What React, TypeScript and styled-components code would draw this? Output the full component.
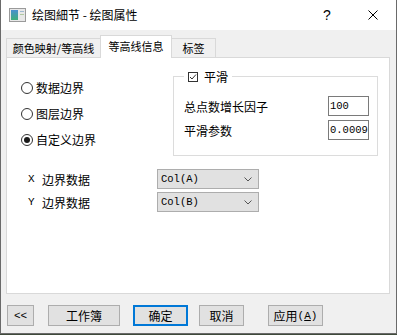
import styled, { createGlobalStyle } from 'styled-components';

const cjk = `"Noto Sans CJK SC", "Noto Sans", sans-serif`;
const mono = `"Liberation Mono", "Noto Sans CJK SC", monospace`;

const GlobalStyle = createGlobalStyle`
  html, body {
    margin: 0;
    padding: 0;
    background: #3f4a3a;
  }
  body {
    font-family: ${cjk};
    font-size: 12px;
    color: #000;
  }
`;

const Window = styled.div`
  width: 397px;
  height: 334px;
  box-sizing: border-box;
  border: 1px solid #6a6a6a;
  border-top: none;
  background: #f0f0f0;
  display: flex;
  flex-direction: column;
`;

const TitleBar = styled.div`
  height: 30px;
  flex: 0 0 30px;
  background: #fff;
  display: flex;
  align-items: center;
  padding-left: 8px;
`;

const TitleText = styled.span`
  margin-left: 6px;
  font-size: 12px;
  flex: 1;
  line-height: 30px;
`;

const CaptionButton = styled.div`
  width: 46px;
  height: 30px;
  display: flex;
  align-items: center;
  justify-content: center;
  font-family: "Liberation Sans", sans-serif;
  font-size: 14px;
`;

const Body = styled.div`
  flex: 1;
  display: flex;
  flex-direction: column;
  padding: 5px 6px 0 5px;
`;

const TabStrip = styled.div`
  display: flex;
  align-items: flex-end;
  height: 23px;
  margin-bottom: -1px;
  position: relative;
  z-index: 1;
`;

const Tab = styled.div<{ $active?: boolean; $w: number }>`
  box-sizing: border-box;
  width: ${({ $w }) => $w}px;
  height: ${({ $active }) => ($active ? 23 : 19)}px;
  margin-bottom: ${({ $active }) => ($active ? 0 : 1)}px;
  margin-left: ${({ $active }) => ($active ? -1 : 0)}px;
  border: 1px solid #d9d9d9;
  border-bottom: none;
  background: ${({ $active }) => ($active ? '#fff' : '#f0f0f0')};
  display: flex;
  align-items: center;
  justify-content: center;
  font-size: 11px;
  padding-bottom: ${({ $active }) => ($active ? 2 : 0)}px;
  z-index: ${({ $active }) => ($active ? 2 : 1)};
  & + & {
    margin-left: -1px;
  }
`;

const Panel = styled.div`
  box-sizing: border-box;
  height: 237px;
  border: 1px solid #d9d9d9;
  background: #fff;
  display: flex;
  flex-direction: column;
`;

const TopArea = styled.div`
  display: flex;
  justify-content: space-between;
  padding: 11px 11px 0 14px;
`;

const RadioList = styled.div`
  display: flex;
  flex-direction: column;
  gap: 7px;
  margin-top: 9px;
`;

const RadioRow = styled.label`
  height: 19px;
  display: flex;
  align-items: center;
  gap: 3px;
  font-size: 12px;
`;

const RadioDot = styled.span<{ $checked?: boolean }>`
  box-sizing: border-box;
  width: 12px;
  height: 12px;
  border-radius: 50%;
  border: 1px solid #333;
  background: #fff;
  display: flex;
  align-items: center;
  justify-content: center;
  &::after {
    content: '';
    width: 6px;
    height: 6px;
    border-radius: 50%;
    background: ${({ $checked }) => ($checked ? '#1a1a1a' : 'transparent')};
  }
`;

const GroupBox = styled.fieldset`
  box-sizing: border-box;
  width: 205px;
  margin: 0;
  padding: 12px 8px 15px 10px;
  border: 1px solid #dcdcdc;
  display: flex;
  flex-direction: column;
  gap: 4px;
`;

const Legend = styled.legend`
  padding: 0 4px;
  height: 15px;
  display: flex;
  align-items: center;
  gap: 6px;
  font-size: 12px;
`;

const FieldRow = styled.div`
  height: 20px;
  display: flex;
  align-items: center;
  justify-content: space-between;
`;

const NumberBox = styled.div`
  box-sizing: border-box;
  width: 41px;
  height: 20px;
  border: 1px solid #7a7a7a;
  background: #fff;
  padding-left: 1px;
  font-family: ${mono};
  font-size: 10.5px;
  line-height: 18px;
  white-space: nowrap;
  overflow: hidden;
`;

const SourceList = styled.div`
  display: flex;
  flex-direction: column;
  gap: 3px;
  margin-top: 13px;
  padding-left: 21px;
`;

const SourceRow = styled.div`
  display: flex;
  align-items: center;
  height: 20px;
`;

const SourceLabel = styled.span`
  width: 129px;
  font-size: 12px;
  display: flex;
  align-items: center;
`;

const AxisLetter = styled.span`
  font-family: ${mono};
  font-size: 11px;
  width: 14px;
`;

const Select = styled.div`
  box-sizing: border-box;
  width: 102px;
  height: 20px;
  border: 1px solid #adadad;
  background: #e1e1e1;
  display: flex;
  align-items: center;
  justify-content: space-between;
  padding: 0 6px 0 3px;
  font-family: ${mono};
  font-size: 10.5px;
`;

const ButtonRow = styled.div`
  display: flex;
  margin-top: 11px;
  padding-left: 1px;
`;

const Button = styled.div<{ $w: number; $ml?: number; $default?: boolean }>`
  box-sizing: border-box;
  width: ${({ $w }) => $w}px;
  height: 21px;
  margin-left: ${({ $ml }) => $ml ?? 0}px;
  border: ${({ $default }) => ($default ? '2px solid #0078d7' : '1px solid #adadad')};
  background: #e1e1e1;
  display: flex;
  align-items: center;
  justify-content: center;
  font-size: 12px;
`;

const Mnemonic = styled.span`
  font-family: ${mono};
  font-size: 11px;
  & u {
    text-underline-offset: 1px;
  }
`;

const Chevron = () => (
  <svg width="8" height="5" viewBox="0 0 8 5">
    <polyline points="0.5,0.5 4,4 7.5,0.5" fill="none" stroke="#555" strokeWidth="1" />
  </svg>
);

const CheckBox = () => (
  <svg width="10" height="10" viewBox="0 0 10 10">
    <rect x="0.5" y="0.5" width="9" height="9" fill="#fff" stroke="#333" />
    <polyline points="2,5 4,7 8,2.5" fill="none" stroke="#333" strokeWidth="1" />
  </svg>
);

const AppIcon = () => (
  <svg width="17" height="14" viewBox="0 0 17 14">
    <defs>
      <linearGradient id="ig" x1="0" y1="0" x2="0" y2="1">
        <stop offset="0" stopColor="#4a8fd0" />
        <stop offset="1" stopColor="#3fae7a" />
      </linearGradient>
    </defs>
    <rect x="0.5" y="0.5" width="16" height="13" fill="#e8e8e8" stroke="#9a9a9a" />
    <rect x="2" y="2" width="7" height="10" fill="url(#ig)" />
    <rect x="11" y="3" width="4" height="1" fill="#9fb8d0" />
    <rect x="11" y="6" width="4" height="1" fill="#b0c8a0" />
  </svg>
);

const CloseIcon = () => (
  <svg width="10" height="10" viewBox="0 0 10 10">
    <path d="M0.5 0.5 L9.5 9.5 M9.5 0.5 L0.5 9.5" stroke="#000" strokeWidth="1" />
  </svg>
);

export default function App() {
  return (
    <>
      <GlobalStyle />
      <Window>
        <TitleBar>
          <AppIcon />
          <TitleText>绘图細节 - 绘图属性</TitleText>
          <CaptionButton>?</CaptionButton>
          <CaptionButton>
            <CloseIcon />
          </CaptionButton>
        </TitleBar>
        <Body>
          <TabStrip>
            <Tab $w={95}>颜色映射/等高线</Tab>
            <Tab $w={72} $active>等高线信息</Tab>
            <Tab $w={45}>标签</Tab>
          </TabStrip>
          <Panel>
            <TopArea>
              <RadioList>
                <RadioRow>
                  <RadioDot />
                  数据边界
                </RadioRow>
                <RadioRow>
                  <RadioDot />
                  图层边界
                </RadioRow>
                <RadioRow>
                  <RadioDot $checked />
                  自定义边界
                </RadioRow>
              </RadioList>
              <GroupBox>
                <Legend>
                  <CheckBox />
                  平滑
                </Legend>
                <FieldRow>
                  <span>总点数增长因子</span>
                  <NumberBox>100</NumberBox>
                </FieldRow>
                <FieldRow>
                  <span>平滑参数</span>
                  <NumberBox>0.0009</NumberBox>
                </FieldRow>
              </GroupBox>
            </TopArea>
            <SourceList>
              <SourceRow>
                <SourceLabel>
                  <AxisLetter>X</AxisLetter>边界数据
                </SourceLabel>
                <Select>
                  <span>Col(A)</span>
                  <Chevron />
                </Select>
              </SourceRow>
              <SourceRow>
                <SourceLabel>
                  <AxisLetter>Y</AxisLetter>边界数据
                </SourceLabel>
                <Select>
                  <span>Col(B)</span>
                  <Chevron />
                </Select>
              </SourceRow>
            </SourceList>
          </Panel>
          <ButtonRow>
            <Button $w={27}>
              <Mnemonic>&lt;&lt;</Mnemonic>
            </Button>
            <Button $w={72} $ml={14}>工作簿</Button>
            <Button $w={55} $ml={13} $default>确定</Button>
            <Button $w={45} $ml={11}>取消</Button>
            <Button $w={55} $ml={24}>
              应用
              <Mnemonic>
                (<u>A</u>)
              </Mnemonic>
            </Button>
          </ButtonRow>
        </Body>
      </Window>
    </>
  );
}
